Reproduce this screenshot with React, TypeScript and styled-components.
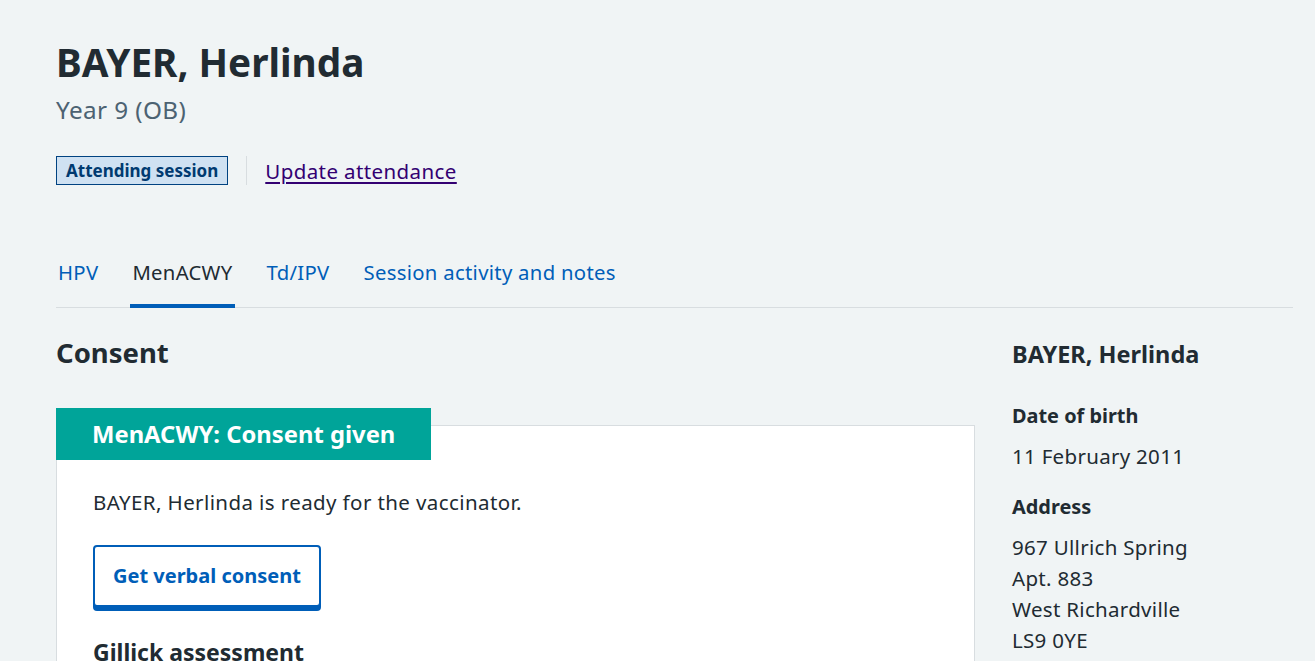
import React from "react";
import styled, { createGlobalStyle } from "styled-components";

const colors = {
  text: "#212b32",
  secondary: "#4c6272",
  link: "#005eb8",
  visited: "#330072",
  border: "#d8dde0",
  page: "#f0f4f5",
  aqua: "#00a499",
};

const GlobalStyle = createGlobalStyle`
  * { box-sizing: border-box; }
  html, body {
    margin: 0;
    padding: 0;
    background: ${colors.page};
    color: ${colors.text};
    font-family: "Noto Sans", "Open Sans", Arial, sans-serif;
  }
`;

const tabs = ["HPV", "MenACWY", "Td/IPV", "Session activity and notes"];

const address = ["967 Ullrich Spring", "Apt. 883", "West Richardville", "LS9 0YE"];

const App = () => {
  return (
    <>
      <GlobalStyle />
      <Page>
        <Title>BAYER, Herlinda</Title>
        <Caption>Year 9 (OB)</Caption>
        <StatusRow>
          <Tag>Attending session</Tag>
          <Divider />
          <VisitedLink href="#">Update attendance</VisitedLink>
        </StatusRow>
        <TabList>
          {tabs.map((t) => (
            <TabItem key={t} $active={t === "MenACWY"}>
              {t}
            </TabItem>
          ))}
        </TabList>
        <Columns>
          <Main>
            <SectionHeading>Consent</SectionHeading>
            <Card>
              <CardHeading>MenACWY: Consent given</CardHeading>
              <CardText>BAYER, Herlinda is ready for the vaccinator.</CardText>
              <SecondaryButton>Get verbal consent</SecondaryButton>
              <SubHeading>Gillick assessment</SubHeading>
            </Card>
          </Main>
          <Aside>
            <AsideTitle>BAYER, Herlinda</AsideTitle>
            <Label>Date of birth</Label>
            <Value>11 February 2011</Value>
            <Label>Address</Label>
            <Value>
              {address.map((line) => (
                <div key={line}>{line}</div>
              ))}
            </Value>
          </Aside>
        </Columns>
      </Page>
    </>
  );
};

export default App;

const Page = styled.div`
  padding: 38px 22px 0 56px;
`;

const Title = styled.h1`
  margin: 0;
  font-size: 38.7px;
  line-height: 48px;
  font-weight: 700;
`;

const Caption = styled.p`
  margin: 8px 0 0;
  font-size: 24.3px;
  letter-spacing: 0.4px;
  line-height: 32px;
  color: ${colors.secondary};
`;

const StatusRow = styled.div`
  display: flex;
  align-items: center;
  margin-top: 30px;
  height: 29px;
`;

const Tag = styled.span`
  display: inline-block;
  padding: 0 9px;
  height: 29px;
  line-height: 27px;
  border: 1px solid #004281;
  background: #cfe1f2;
  color: #003a70;
  font-size: 17px;
  font-weight: 700;
`;

const Divider = styled.span`
  display: block;
  width: 1px;
  height: 29px;
  background: ${colors.border};
  margin: 0 18px;
`;

const VisitedLink = styled.a`
  color: ${colors.visited};
  font-size: 20.5px;
  letter-spacing: 0.4px;
  text-decoration: underline;
  text-underline-offset: 3px;
`;

const TabList = styled.div`
  display: flex;
  gap: 30px;
  margin-top: 73px;
  border-bottom: 1px solid ${colors.border};
`;

const TabItem = styled.div<{ $active?: boolean }>`
  padding: 0 2px 18px;
  margin-bottom: -1px;
  font-size: 20.3px;
  letter-spacing: 0.3px;
  line-height: 28px;
  color: ${(p) => (p.$active ? colors.text : colors.link)};
  border-bottom: 4px solid ${(p) => (p.$active ? colors.link : "transparent")};
`;

const Columns = styled.div`
  display: grid;
  grid-template-columns: 919px 1fr;
  gap: 37px;
`;

const Main = styled.div``;

const SectionHeading = styled.h2`
  margin: 27px 0 0;
  font-size: 27.5px;
  line-height: 36px;
  font-weight: 700;
`;

const Card = styled.div`
  margin-top: 54px;
  background: #fff;
  border: 1px solid ${colors.border};
  padding: 0 36px 40px;
`;

const CardHeading = styled.h2`
  display: inline-block;
  margin: -18px 0 0 -37px;
  padding: 10px 36px;
  background: ${colors.aqua};
  color: #fff;
  font-size: 23.8px;
  line-height: 32px;
  font-weight: 700;
`;

const CardText = styled.p`
  margin: 28px 0 0;
  font-size: 20.5px;
  letter-spacing: 0.4px;
  line-height: 28px;
`;

const SecondaryButton = styled.button`
  display: block;
  margin-top: 29px;
  padding: 15px 18px;
  background: #fff;
  border: 2px solid ${colors.link};
  border-radius: 4px;
  box-shadow: 0 4px 0 ${colors.link};
  color: ${colors.link};
  font-family: inherit;
  font-size: 20px;
  line-height: 28px;
  font-weight: 700;
  cursor: pointer;
`;

const SubHeading = styled.h3`
  margin: 29px 0 0;
  font-size: 23px;
  line-height: 32px;
  font-weight: 700;
`;

const Aside = styled.div`
  padding-top: 30px;
`;

const AsideTitle = styled.h3`
  margin: 0 0 30px;
  font-size: 23.5px;
  line-height: 32px;
  font-weight: 700;
`;

const Label = styled.div`
  font-size: 19.9px;
  line-height: 31px;
  font-weight: 700;
`;

const Value = styled.div`
  margin: 10px 0 19px;
  font-size: 20.5px;
  letter-spacing: 0.3px;
  line-height: 31px;
`;
